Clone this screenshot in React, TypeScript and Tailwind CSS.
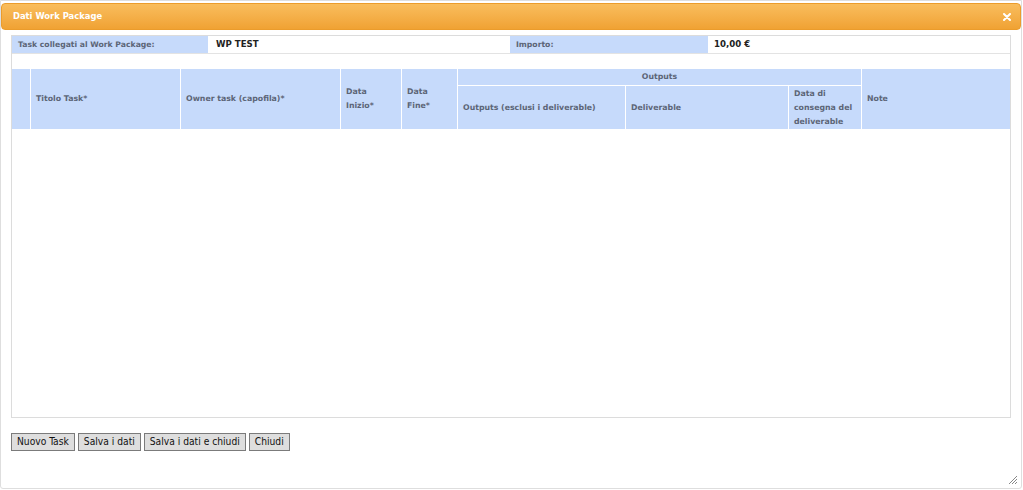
import React from "react";

const verdana = { fontFamily: '"DejaVu Sans", Verdana, sans-serif' };
const tahoma = { fontFamily: '"DejaVu Sans Condensed", Tahoma, sans-serif' };

function HeadCell({ children, className = "" }: { children?: React.ReactNode; className?: string }) {
  return (
    <div className={`bg-[#c6dafb] text-[7.8px] font-bold leading-[14px] text-[#5c6577] flex items-center px-[5px] ${className}`}>
      {children}
    </div>
  );
}

function ResizeGrip() {
  return (
    <svg width="10" height="10" viewBox="0 0 10 10" className="absolute right-[3px] bottom-[3px]">
      <path d="M9 1 L1 9 M9 4 L4 9 M9 7 L7 9" stroke="#888" strokeWidth="1" />
    </svg>
  );
}

export default function App() {
  const buttons = ["Nuovo Task", "Salva i dati", "Salva i dati e chiudi", "Chiudi"];

  return (
    <div className="w-[1023px] h-[490px] bg-white" style={verdana}>
      <div className="relative w-[1022px] h-[489px] border border-[#dedede] rounded-b-[3px] bg-white">
        {/* Title bar */}
        <div className="mt-[2px] h-[27px] rounded-[4px] border border-[#eb9c2c] bg-gradient-to-b from-[#f9bd5c] to-[#f0a233] flex items-center justify-between pl-[11px] pr-[9px]">
          <span className="text-white text-[8.4px] font-bold">Dati Work Package</span>
          <svg width="8" height="8" viewBox="0 0 8 8">
            <path d="M1 1 L7 7 M7 1 L1 7" stroke="#fff" strokeWidth="2" strokeLinecap="round" />
          </svg>
        </div>

        <div className="px-[10px] pt-[5px]">
          {/* Box */}
          <div className="h-[383px] border border-[#dcdcdc]">
            {/* Info row */}
            <div className="grid grid-cols-[196px_302px_198px_1fr] h-[18px] border-b border-[#e3e3e3] font-bold">
              <div className="bg-[#c6dafb] text-[#5c6577] text-[7.7px] flex items-center pl-[6px]">Task collegati al Work Package:</div>
              <div className="text-[#222] text-[8.6px] flex items-center pl-[8px]">WP TEST</div>
              <div className="bg-[#c6dafb] text-[#5c6577] text-[7.7px] flex items-center pl-[6px]">Importo:</div>
              <div className="text-[#222] text-[8.6px] flex items-center pl-[6px]">10,00 €</div>
            </div>

            {/* Table header */}
            <div className="mt-[15px] grid grid-cols-[18px_149px_159px_60px_55px_167px_162px_72px_1fr] grid-rows-[16px_43px] gap-px bg-white">
              <HeadCell className="row-span-2" />
              <HeadCell className="row-span-2">Titolo Task*</HeadCell>
              <HeadCell className="row-span-2">Owner task (capofila)*</HeadCell>
              <HeadCell className="row-span-2">Data<br />Inizio*</HeadCell>
              <HeadCell className="row-span-2">Data<br />Fine*</HeadCell>
              <HeadCell className="col-span-3 justify-center">Outputs</HeadCell>
              <HeadCell className="row-span-2">Note</HeadCell>
              <HeadCell>Outputs (esclusi i deliverable)</HeadCell>
              <HeadCell>Deliverable</HeadCell>
              <HeadCell>Data di<br />consegna del<br />deliverable</HeadCell>
            </div>
          </div>

          {/* Buttons */}
          <div className="mt-[15px] flex gap-[3px]" style={tahoma}>
            {buttons.map((b) => (
              <button
                key={b}
                type="button"
                className="h-[18px] px-[5px] bg-[#dedede] border border-[#7b7b7b] text-[10.2px] text-[#111] leading-none"
              >
                {b}
              </button>
            ))}
          </div>
        </div>

        <ResizeGrip />
      </div>
    </div>
  );
}
